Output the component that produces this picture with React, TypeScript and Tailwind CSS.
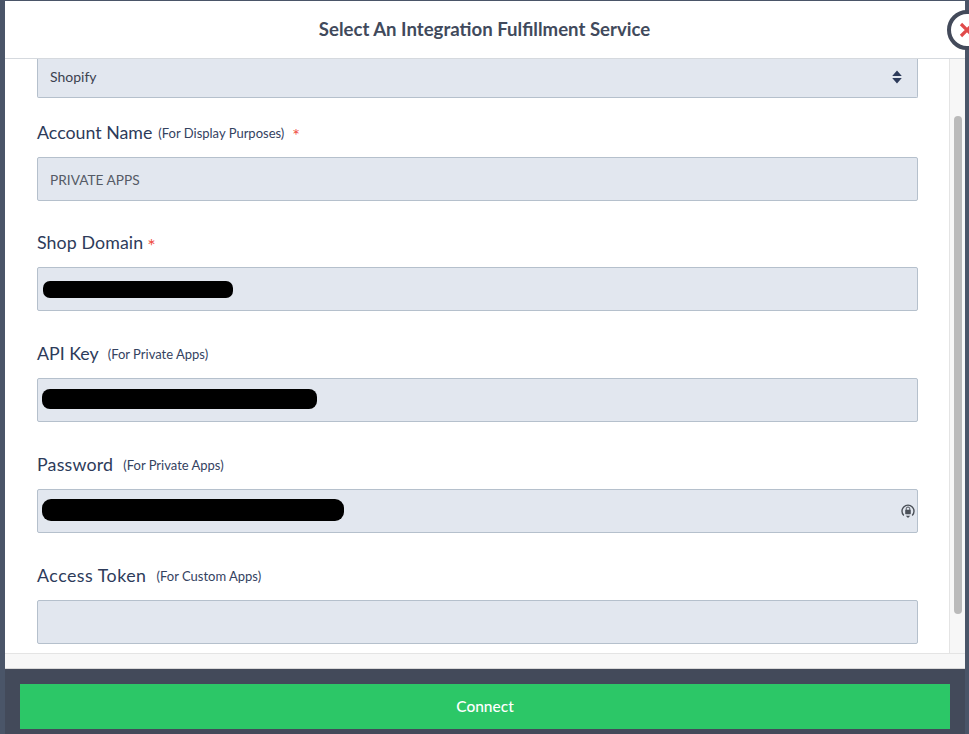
import React from 'react';

function Field({ label, labelClass = '', hint, hintClass, star, height = 'h-[111px]', children }: { label: string; labelClass?: string; hint?: string; hintClass?: string; star?: React.ReactNode; height?: string; children: React.ReactNode }) {
  return (
    <div className={height}>
      <div className="h-[22px] flex items-center text-[#2d3b5a]">
        <span className={`text-[17.8px] leading-none ${labelClass}`}>{label}</span>
        {hint && <span className={`text-[13px] leading-none text-[#34425f] ${hintClass}`}>{hint}</span>}
        {star}
      </div>
      {children}
    </div>
  );
}

function Box({ children, className = '' }: { children?: React.ReactNode; className?: string }) {
  return (
    <div className={`h-[44px] mt-[13px] w-[881px] flex items-center justify-between bg-[#e2e7ef] border border-[#b5c0cc] rounded-[2px] ${className}`}>
      {children}
    </div>
  );
}

export default function App() {
  return (
    <div className="relative w-[969px] h-[734px] overflow-hidden bg-[#4a5568] pl-[5px] pt-px font-['Lato','Liberation_Sans',sans-serif]">
      <div className="w-[960px] h-[733px] flex flex-col bg-white">
        {/* header */}
        <div className="h-[58px] shrink-0 flex items-center justify-center border-b border-[#d5d9de]">
          <h1 className="text-[18.6px] font-bold text-[#414a5c] -ml-[1px]">Select An Integration Fulfillment Service</h1>
        </div>

        {/* scroll area */}
        <div className="h-[609px] shrink-0 flex flex-col">
          <div className="h-[594px] flex">
            <div className="w-[945px] h-full overflow-hidden pl-[32px] border-r border-[#e4e4e4]">
              <div className="h-[39px] w-[881px] flex items-center justify-between bg-[#e2e7ef] border border-t-0 border-[#b5c0cc] rounded-b-[2px] pl-[12px] pr-[15px] pb-[3px] text-[14px] text-[#3b4250]">
                <span>Shopify</span>
                <svg width="10" height="14" viewBox="0 0 10 14" className="text-[#2d3b5a]">
                  <path d="M5 0.5 L9.8 6 H0.2 Z M0.2 8 H9.8 L5 13.5 Z" fill="currentColor" />
                </svg>
              </div>

              <div className="h-[24px]" />

              <Field
                label="Account Name"
                hint="(For Display Purposes)"
                hintClass="ml-[6px]"
                height="h-[110px]"
                star={<span className="ml-[8px] text-[18px] leading-none pt-[3px] text-[#ef4d43]">*</span>}
              >
                <Box className="pl-[12px] pt-[3px] text-[13.7px] text-[#555b66]">PRIVATE APPS</Box>
              </Field>

              <Field label="Shop Domain" labelClass="tracking-[0.1px]" star={<span className="ml-[4px] text-[20px] leading-none pt-[3px] text-[#ef4d43]">*</span>}>
                <Box className="pl-[5px]">
                  <div className="w-[190px] h-[17px] bg-black rounded-[7px]" />
                </Box>
              </Field>

              <Field label="API Key" hint="(For Private Apps)" hintClass="ml-[9px]">
                <Box className="pl-[4px] pb-[2px]">
                  <div className="w-[275px] h-[20px] bg-black rounded-[8px]" />
                </Box>
              </Field>

              <Field label="Password" labelClass="tracking-[0.2px]" hint="(For Private Apps)" hintClass="ml-[10px]">
                <Box className="pl-[4px] pr-[1px]">
                  <div className="w-[302px] h-[22px] -mt-[2px] bg-black rounded-[9px]" />
                  <svg width="16" height="16" viewBox="0 0 16 16" fill="none" className="text-[#4b5058]">
                    <path d="M3.8 12.4 A6 6 0 1 1 12.2 12.4" stroke="currentColor" strokeWidth="1.4" />
                    <rect x="5.2" y="6.8" width="5.6" height="4.4" rx="0.6" fill="currentColor" />
                    <path d="M6.2 7 V5.8 A1.8 1.8 0 0 1 9.8 5.8 V7" stroke="currentColor" strokeWidth="1" />
                    <path d="M5.8 12.8 H10.2 L8 15 Z" fill="currentColor" />
                  </svg>
                </Box>
              </Field>

              <Field label="Access Token" labelClass="tracking-[0.5px]" hint="(For Custom Apps)" hintClass="ml-[10px]">
                <Box />
              </Field>
            </div>

            {/* vertical scrollbar */}
            <div className="w-[15px] bg-[#f7f7f7] flex justify-center">
              <div className="w-[8px] h-[498px] mt-[57px] rounded-full bg-[#bababa]" />
            </div>
          </div>
          {/* horizontal scrollbar strip */}
          <div className="h-[15px] w-full bg-[#f7f7f7] border-t border-[#e4e4e4]" />
        </div>

        {/* footer */}
        <div className="flex-1 bg-[#434a5a] border-t border-[#d8d8d8] pt-[15px] pl-[15px]">
          <button className="w-[930px] h-[45px] bg-[#2cc767] text-white text-[15.5px] font-medium flex items-center justify-center">
            Connect
          </button>
        </div>
      </div>

      {/* close button */}
      <div className="absolute left-[947px] top-[10px] w-[40px] h-[40px] rounded-full bg-white border-[4px] border-[#434a5a] flex items-center justify-center">
        <svg width="16" height="16" viewBox="0 0 16 16" className="text-[#e04a4a] -ml-[1px]">
          <path d="M2 2 L14 14 M14 2 L2 14" stroke="currentColor" strokeWidth="3.2" />
        </svg>
      </div>
    </div>
  );
}
